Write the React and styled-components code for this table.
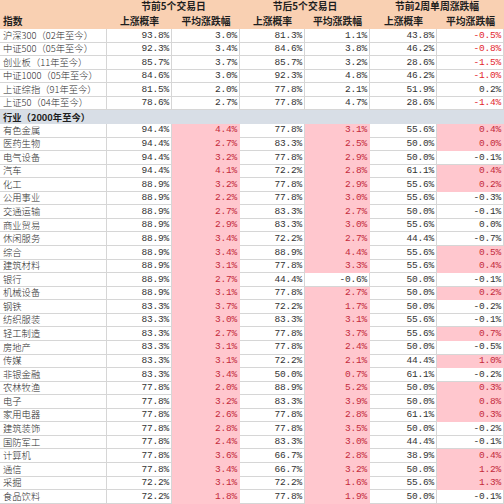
import React from 'react';
import styled, { createGlobalStyle } from 'styled-components';

const GlobalStyle = createGlobalStyle`
  html, body {
    margin: 0;
    padding: 0;
    background: #fff;
  }
  body {
    width: 504px;
    height: 504px;
    overflow: hidden;
  }
`;

const PEACH = '#F9D0B2';
const PINK = '#FFC7CE';
const GRID = '#D6D6D6';

const Sheet = styled.div`
  display: grid;
  grid-template-columns: 107px 65px 68px 65px 65px 67px 67px;
  grid-template-rows: 14.5px 14.5px repeat(35, 13.57px);
  width: 504px;
  font-family: "Noto Sans CJK SC", "Liberation Sans", sans-serif;
  color: #222;
`;

const HeadCell = styled.div`
  grid-column: ${(p) => p.$span || 'auto'};
  background: ${PEACH};
  display: flex;
  align-items: center;
  justify-content: ${(p) => (p.$left ? 'flex-start' : 'center')};
  padding-left: ${(p) => (p.$left ? '3px' : '0')};
  font-size: 9.8px;
  font-weight: 700;
  line-height: 1;
  white-space: nowrap;
  color: #1e1e1e;
`;

const SectionRow = styled.div`
  grid-column: 1 / -1;
  background: #D8DEE6;
  display: flex;
  align-items: center;
  padding-left: 3px;
  font-size: 9.3px;
  font-weight: 700;
  line-height: 1;
  color: #1e1e1e;
`;

const NameCell = styled.div`
  box-sizing: border-box;
  display: flex;
  align-items: center;
  padding-left: 3px;
  font-size: 9.3px;
  font-weight: 300;
  line-height: 1;
  white-space: nowrap;
  color: #2a2a2a;
  border-right: 1px solid ${GRID};
  border-bottom: 1px solid ${GRID};
`;

const NumCell = styled.div`
  box-sizing: border-box;
  display: flex;
  align-items: center;
  justify-content: flex-end;
  padding-right: 2px;
  font-family: "Liberation Mono", "DejaVu Sans Mono", monospace;
  font-size: 9.5px;
  line-height: 1;
  letter-spacing: -0.2px;
  background: ${(p) => (p.$pink ? PINK : '#fff')};
  color: ${(p) => (p.$pink ? '#C42A3C' : p.$neg ? '#E3262E' : '#333')};
  border-right: 1px solid ${(p) => (p.$pink ? PINK : GRID)};
  border-bottom: 1px solid ${(p) => (p.$pink ? PINK : GRID)};
`;

const indices = [
  ['沪深300（02年至今）', '93.8', '3.0', '81.3', '1.1', '43.8', '-0.5'],
  ['中证500（05年至今）', '92.3', '3.4', '84.6', '3.8', '46.2', '-0.8'],
  ['创业板（11年至今）', '85.7', '3.7', '85.7', '3.2', '28.6', '-1.5'],
  ['中证1000（05年至今）', '84.6', '3.0', '92.3', '4.8', '46.2', '-1.0'],
  ['上证综指（91年至今）', '81.5', '2.0', '77.8', '2.1', '51.9', '0.2'],
  ['上证50（04年至今）', '78.6', '2.7', '77.8', '4.7', '28.6', '-1.4'],
];

// last value: whether the final column is highlighted
const industries = [
  ['有色金属', '94.4', '4.4', '77.8', '3.1', '55.6', '0.4', true],
  ['医药生物', '94.4', '2.7', '83.3', '2.5', '50.0', '0.0', true],
  ['电气设备', '94.4', '3.2', '77.8', '2.9', '50.0', '-0.1', false],
  ['汽车', '94.4', '4.1', '72.2', '2.8', '61.1', '0.4', true],
  ['化工', '88.9', '3.2', '77.8', '2.9', '55.6', '0.2', true],
  ['公用事业', '88.9', '2.2', '77.8', '3.0', '55.6', '-0.3', false],
  ['交通运输', '88.9', '2.7', '83.3', '2.7', '50.0', '-0.1', false],
  ['商业贸易', '88.9', '2.9', '83.3', '3.0', '55.6', '0.0', false],
  ['休闲服务', '88.9', '3.4', '72.2', '2.7', '44.4', '-0.7', false],
  ['综合', '88.9', '3.4', '88.9', '4.4', '55.6', '0.5', true],
  ['建筑材料', '88.9', '3.1', '77.8', '3.3', '55.6', '0.4', true],
  ['银行', '88.9', '2.7', '44.4', '-0.6', '50.0', '-0.1', false],
  ['机械设备', '88.9', '3.1', '77.8', '2.7', '50.0', '0.2', true],
  ['钢铁', '83.3', '3.7', '72.2', '1.7', '50.0', '-0.2', false],
  ['纺织服装', '83.3', '3.0', '83.3', '3.1', '55.6', '-0.1', false],
  ['轻工制造', '83.3', '2.7', '77.8', '3.7', '55.6', '0.7', true],
  ['房地产', '83.3', '3.1', '77.8', '2.4', '50.0', '-0.5', false],
  ['传媒', '83.3', '3.1', '72.2', '2.1', '44.4', '1.0', true],
  ['非银金融', '83.3', '3.4', '50.0', '0.7', '61.1', '-0.2', false],
  ['农林牧渔', '77.8', '2.0', '88.9', '5.2', '50.0', '0.3', true],
  ['电子', '77.8', '3.2', '83.3', '3.9', '50.0', '0.8', true],
  ['家用电器', '77.8', '2.6', '77.8', '2.8', '61.1', '0.3', true],
  ['建筑装饰', '77.8', '2.8', '77.8', '3.5', '50.0', '-0.2', false],
  ['国防军工', '77.8', '2.4', '83.3', '3.0', '44.4', '-0.1', false],
  ['计算机', '77.8', '3.6', '66.7', '2.8', '38.9', '0.4', true],
  ['通信', '77.8', '3.4', '66.7', '3.2', '50.0', '1.2', true],
  ['采掘', '72.2', '3.1', '72.2', '1.6', '55.6', '1.3', true],
  ['食品饮料', '72.2', '1.8', '77.8', '1.9', '50.0', '-0.1', false],
];

const pct = (v) => `${v}%`;
const isNeg = (v) => v.startsWith('-');

function IndexRow({ row }) {
  const [name, ...vals] = row;
  return (
    <>
      <NameCell>{name}</NameCell>
      {vals.map((v, i) => (
        <NumCell key={i} $neg={i === 5 && isNeg(v)}>
          {pct(v)}
        </NumCell>
      ))}
    </>
  );
}

function IndustryRow({ row }) {
  const [name, a, b, c, d, e, f, lastPink] = row;
  return (
    <>
      <NameCell>{name}</NameCell>
      <NumCell>{pct(a)}</NumCell>
      <NumCell $pink={!isNeg(b)}>{pct(b)}</NumCell>
      <NumCell>{pct(c)}</NumCell>
      <NumCell $pink={!isNeg(d)}>{pct(d)}</NumCell>
      <NumCell>{pct(e)}</NumCell>
      <NumCell $pink={lastPink}>{pct(f)}</NumCell>
    </>
  );
}

export default function App() {
  return (
    <>
      <GlobalStyle />
      <Sheet>
        <HeadCell />
        <HeadCell $span="span 2">节前5个交易日</HeadCell>
        <HeadCell $span="span 2">节后5个交易日</HeadCell>
        <HeadCell $span="span 2">节前2周单周涨跌幅</HeadCell>

        <HeadCell $left>指数</HeadCell>
        <HeadCell>上涨概率</HeadCell>
        <HeadCell>平均涨跌幅</HeadCell>
        <HeadCell>上涨概率</HeadCell>
        <HeadCell>平均涨跌幅</HeadCell>
        <HeadCell>上涨概率</HeadCell>
        <HeadCell>平均涨跌幅</HeadCell>

        {indices.map((r) => (
          <IndexRow key={r[0]} row={r} />
        ))}

        <SectionRow>行业（2000年至今）</SectionRow>

        {industries.map((r) => (
          <IndustryRow key={r[0]} row={r} />
        ))}
      </Sheet>
    </>
  );
}
